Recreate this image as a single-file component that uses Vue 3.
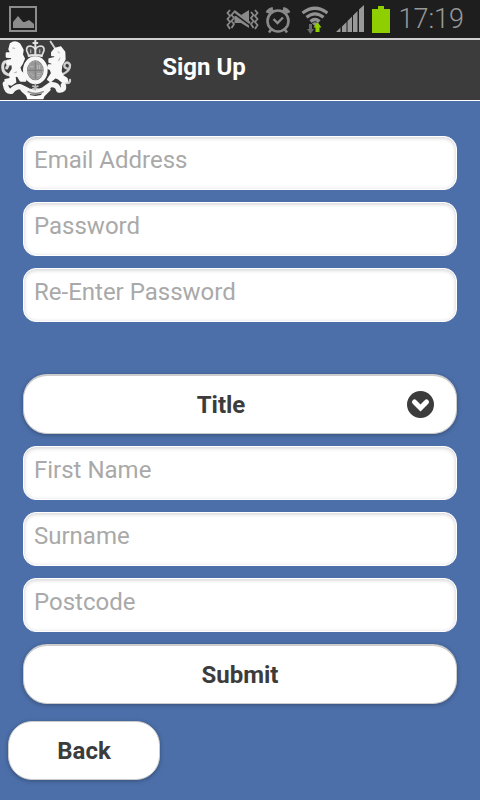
<script setup>
import { reactive } from 'vue'

const account = [
  { id: 'email', label: 'Email Address', type: 'email' },
  { id: 'password', label: 'Password', type: 'password' },
  { id: 'confirm', label: 'Re-Enter Password', type: 'password' },
]
const personal = [
  { id: 'first', label: 'First Name', type: 'text' },
  { id: 'surname', label: 'Surname', type: 'text' },
  { id: 'postcode', label: 'Postcode', type: 'text' },
]
const form = reactive({ email: '', password: '', confirm: '', title: '', first: '', surname: '', postcode: '' })
</script>

<template>
  <div class="screen">
    <div class="status">
      <svg class="picture" viewBox="0 0 28 26" width="28" height="26">
        <rect x="1" y="1" width="26" height="24" fill="none" stroke="#8c8c8c" stroke-width="2" />
        <path d="M4 22V16L9 10L14 16L16 16L20 14L25 18V22Z" fill="#8c8c8c" />
      </svg>
      <div class="tray">
        <svg viewBox="0 0 104 32" width="104" height="32">
          <g fill="none" stroke="#8a8a8a" stroke-width="1.800">
            <path d="M6 7L3.500 10L6 13L3.500 16L6 19L3.500 22L6 26M10 9L7.500 12L10 15L7.500 18L10 21L7.500 25" />
            <path d="M27 9L29.500 12L27 15L29.500 18L27 21L29.500 25M31 7L33.500 10L31 13L33.500 16L31 19L33.500 22L31 26" />
          </g>
          <path d="M10.500 13H12L25 22.500V25L17 20H10.500ZM17 12L25 7V18.500Z" fill="#8a8a8a" />
          <path d="M10 8L26 20" stroke="#8a8a8a" stroke-width="2.200" />
          <g fill="none" stroke="#8a8a8a">
            <circle cx="54" cy="18" r="10.500" stroke-width="2.600" />
            <path d="M49.500 16L53.500 20L59 14.500" stroke-width="2.400" />
            <path d="M43.500 10Q44.500 7 49 6M59 6Q63.500 7 64.500 10" stroke-width="4" />
            <path d="M47.500 26L45 29.500M60.500 26L63 29.500" stroke-width="2.500" />
          </g>
          <g fill="none" stroke="#929292" stroke-width="3.200">
            <path d="M78.500 10Q91 0.500 103.500 10" />
            <path d="M82.500 14.300Q91 7.500 99.500 14.300" />
            <path d="M86.500 18.500Q91 14.500 95.500 18.500" />
          </g>
          <path d="M88 20.500Q91 18 94 20.500L91 23Z" fill="#929292" />
          <path d="M85 21H88V26H90L86.500 31L83 26H85Z" fill="#6a6a6a" />
          <path d="M91.500 29V24.500H89.500L93.500 19L97.500 24.500H95.500V29Z" fill="#8fce00" />
        </svg>
        <svg viewBox="0 0 28 28" width="28" height="28">
          <path d="M0 27L4.500 22.500V27ZM6 27V21.500L10.500 17V27ZM11.500 27V16L16 11.500V27ZM17 27V10.500L21.500 6V27ZM23 27V4.500L28 0V27Z" fill="#999" />
        </svg>
        <svg viewBox="0 0 18 27" width="18" height="27">
          <path d="M0 3H6V0H12V3H18V27H0Z" fill="#8fce00" />
        </svg>
        <time class="clock">17:19</time>
      </div>
    </div>

    <header class="bar">
      <svg class="crest" viewBox="0 0 216 180" width="72" height="60" role="img" aria-label="Royal coat of arms">
        <g stroke-linejoin="round" stroke-linecap="round">
          <!-- lion -->
          <path d="M34 106Q8 104 8 82Q8 62 22 66Q28 74 20 84" fill="none" stroke="#dcdcdc" stroke-width="9" />
          <path d="M32 12Q44 2 58 12L68 30L66 44L72 56L66 70L58 82L62 94L76 108L76 122L62 122L52 106L44 110L46 126L34 134L20 130L16 120L32 116L30 100L38 88L38 74L22 72L22 62L36 60L36 52L20 50L20 40L34 40L28 28Z" fill="#f8f8f8" stroke="#f8f8f8" stroke-width="6" />
          <path d="M38 24L44 25M44 98L50 96" stroke="#aaa" stroke-width="3" fill="none" />
          <!-- unicorn -->
          <path d="M152 5L168 30" fill="none" stroke="#cfcfcf" stroke-width="6" />
          <path d="M186 104Q212 92 210 74Q202 62 194 72Q190 84 202 86M194 128Q212 132 210 120" fill="none" stroke="#ccc" stroke-width="7" />
          <path d="M156 38L166 26L182 22L193 36L194 58L184 76L182 94L188 108L200 116L202 124L188 126L176 116L166 112L152 124L144 118L156 100L152 88L144 84L146 76L158 76L156 68L148 66L148 58L164 54L168 46L156 46Z" fill="#f8f8f8" stroke="#f8f8f8" stroke-width="6" />
          <path d="M174 36L178 38M180 54L176 62" fill="none" stroke="#aaa" stroke-width="3" />
          <!-- crown -->
          <path d="M86 46L80 32Q78 18 92 18Q102 20 106 28Q110 20 120 18Q134 18 132 32L126 46Z" fill="#4c4c4c" stroke="#dcdcdc" stroke-width="5" />
          <path d="M106 2V44M100 9H112M86 48Q106 42 126 48" fill="none" stroke="#e4e4e4" stroke-width="6" />
          <path d="M92 30V38M119 30V38" stroke="#aaa" stroke-width="4" />
          <!-- scroll -->
          <path d="M16 132Q20 156 34 154Q44 140 60 140L84 152Q106 160 130 150L152 134Q172 132 176 150Q194 152 190 136" fill="none" stroke="#f4f4f4" stroke-width="16" />
          <path d="M68 150L84 164M146 148L130 164" fill="none" stroke="#f4f4f4" stroke-width="12" />
          <path d="M76 160Q106 176 136 160L130 178H82Z" fill="#fff" />
          <path d="M84 155Q106 166 130 155" fill="none" stroke="#888" stroke-width="4" />
          <!-- shield and garter -->
          <ellipse cx="106" cy="91" rx="31" ry="36" fill="#777" stroke="#f8f8f8" stroke-width="12" />
          <ellipse cx="106" cy="91" rx="22" ry="27" fill="#989898" stroke="#a8a8a8" stroke-width="3" />
          <path d="M106 66V116M85 91H127" stroke="#7c7c7c" stroke-width="3" />
          <path d="M91 80H100M113 76V86M119 76V86M92 100L100 107M112 101H121M112 107H119" stroke="#bbb" stroke-width="3" />
          <path d="M106 132V150M98 138L114 146M114 138L98 146" stroke="#bbb" stroke-width="5" />
        </g>
      </svg>
      <h1>Sign Up</h1>
    </header>

    <main>
      <form @submit.prevent>
        <div class="group">
          <input v-for="f in account" :key="f.id" :id="f.id" v-model="form[f.id]" class="field" :type="f.type" :placeholder="f.label" :aria-label="f.label" />
        </div>
        <div class="group">
          <div class="picker">
            <select id="title" v-model="form.title" class="pill" aria-label="Title">
              <option value="">Title</option>
              <option>Mr</option>
              <option>Mrs</option>
              <option>Miss</option>
              <option>Ms</option>
              <option>Dr</option>
            </select>
            <svg class="chevron" viewBox="0 0 27 27" width="27" height="27">
              <circle cx="13.500" cy="13.500" r="13.500" fill="#3c3c3c" />
              <path d="M7.500 11L13.500 17L19.500 11" fill="none" stroke="#fff" stroke-width="5" stroke-linecap="round" />
            </svg>
          </div>
          <input v-for="f in personal" :key="f.id" :id="f.id" v-model="form[f.id]" class="field" :type="f.type" :placeholder="f.label" :aria-label="f.label" />
          <button class="pill" type="submit">Submit</button>
        </div>
      </form>
      <button class="pill back" type="button">Back</button>
    </main>
  </div>
</template>

<style>
body {
  background: #4c6fa9;
}
</style>

<style scoped>
.screen {
  min-height: 100vh;
  background: #4c6fa9;
  font-family: Roboto, "Liberation Sans", sans-serif;
}
.status {
  display: flex;
  justify-content: space-between;
  align-items: center;
  height: 38px;
  padding: 0 16px 0 9px;
  background: #1e1e1e;
}
.tray {
  display: flex;
  align-items: center;
  gap: 8px;
}
svg {
  display: block;
}
.clock {
  color: #999;
  font-size: 27px;
  font-weight: 300;
  line-height: 32px;
}
.bar {
  display: grid;
  grid-template-columns: 72px 1fr 144px;
  height: 60px;
  border-top: 2px solid #d0d0d0;
  border-bottom: 1px solid #fff;
  background: #3c3c3c;
}
h1 {
  margin: 0;
  padding-top: 12px;
  color: #fff;
  font-size: 24px;
  font-weight: 700;
  line-height: 30px;
  text-align: center;
}
main {
  padding: 35px 8px 20px;
}
form {
  display: flex;
  flex-direction: column;
  gap: 52px;
  margin: 0 15px 17px;
}
.group {
  display: flex;
  flex-direction: column;
  gap: 12px;
}
.field {
  box-sizing: border-box;
  width: 100%;
  height: 54px;
  margin: 0;
  padding: 0 10px 6px;
  border: 1px solid #fff;
  border-radius: 13px;
  background: #fff;
  box-shadow: inset 0 1px 4px rgba(0, 0, 0, 0.2);
  color: #333;
  font: 400 24px Roboto, "Liberation Sans", sans-serif;
}
.field::placeholder {
  color: #a9a9a9;
  opacity: 1;
}
.pill {
  appearance: none;
  box-sizing: border-box;
  width: 100%;
  height: 60px;
  margin: 0;
  padding: 0 24px;
  border: 1px solid #ccc;
  border-top-width: 2px;
  border-radius: 24px;
  background: #fff;
  box-shadow: 0 1px 4px rgba(0, 0, 0, 0.3);
  color: #3c3c3c;
  font: 700 24px Roboto, "Liberation Sans", sans-serif;
  text-align: center;
}
.picker {
  position: relative;
}
.picker .pill {
  display: block;
  padding: 0 62px 0 24px;
  text-align-last: center;
}
.chevron {
  position: absolute;
  top: 17px;
  right: 23px;
  pointer-events: none;
}
.back {
  width: 152px;
  height: 59px;
  border-top-width: 1px;
}
</style>
